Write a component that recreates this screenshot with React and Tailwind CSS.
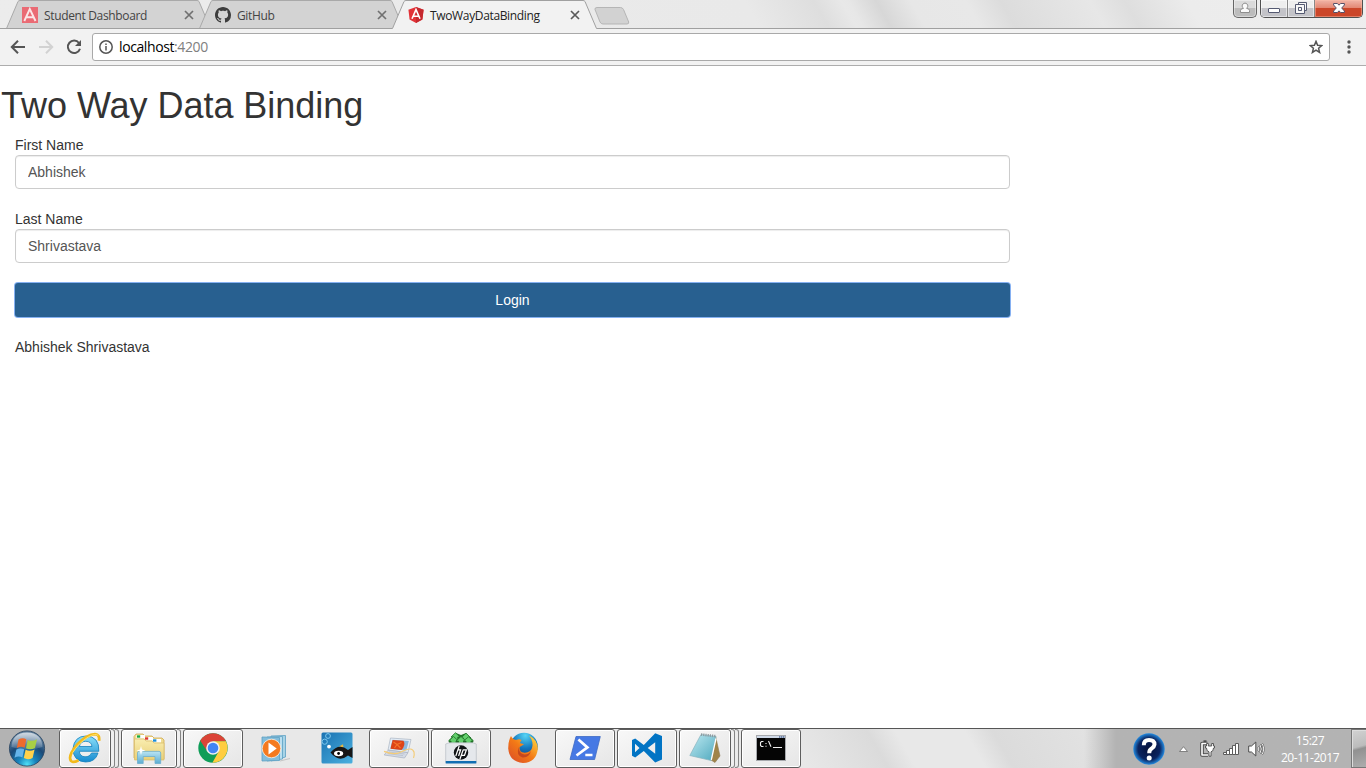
import React from "react";

const ICON = "block h-8 w-8 shrink-0 overflow-visible";

function AngularFlat() {
  return (
    <svg viewBox="0 0 16 16" className="h-4 w-4">
      <rect width="16" height="16" fill="#ea6b74" />
      <path d="M2.3 14 L7.8 2 L13.5 14 M4.3 10.3 H11.6" fill="none" stroke="#fbe6e7" strokeWidth="1.9" />
    </svg>
  );
}
function GitHubMark() {
  return (
    <svg viewBox="0 0 16 16" className="h-4 w-4" fill="#3c3c3c">
      <path d="M8 0C3.58 0 0 3.58 0 8c0 3.54 2.29 6.53 5.47 7.59.4.07.55-.17.55-.38 0-.19-.01-.82-.01-1.49-2.01.37-2.53-.49-2.69-.94-.09-.23-.48-.94-.82-1.13-.28-.15-.68-.52-.01-.53.63-.01 1.08.58 1.23.82.72 1.21 1.87.87 2.33.66.07-.52.28-.87.51-1.07-1.78-.2-3.64-.89-3.64-3.95 0-.87.31-1.59.82-2.15-.08-.2-.36-1.02.08-2.12 0 0 .67-.21 2.2.82.64-.18 1.32-.27 2-.27s1.36.09 2 .27c1.53-1.04 2.2-.82 2.2-.82.44 1.1.16 1.92.08 2.12.51.56.82 1.27.82 2.15 0 3.07-1.87 3.75-3.65 3.95.29.25.54.73.54 1.48 0 1.07-.01 1.93-.01 2.2 0 .21.15.46.55.38A8.01 8.01 0 0 0 16 8c0-4.42-3.58-8-8-8z" />
    </svg>
  );
}
function AngularShield() {
  return (
    <svg viewBox="0 0 16 16" className="h-4 w-4">
      <path d="M8 0 L15.6 2.7 L14.4 12.5 L8 16 L1.6 12.5 L.4 2.7 Z" fill="#e23237" />
      <path d="M8 0 L15.6 2.7 L14.4 12.5 L8 16 Z" fill="#c5282e" />
      <path d="M4 11.7 L8 2.6 L12 11.7 M5.4 9.2 H10.6" fill="none" stroke="#fff" strokeWidth="1.6" />
    </svg>
  );
}

function Tab({ icon, title, active, first }) {
  return (
    <div className={`relative h-[29px] w-[205px] shrink-0 ${first ? "" : "-ml-3"} ${active ? "z-10" : ""}`}>
      <svg viewBox="0 0 205 29" className="absolute inset-0 h-[29px] w-[205px]">
        <path
          d="M0.5 29 V28.5 L12 1.5 Q12.6 .5 14 .5 H191 Q192.4 .5 193 1.5 L204.5 28.5 V29 Z"
          fill={active ? "#f2f2f2" : "#d3d3d3"}
        />
        <path
          d="M0.5 28.5 L12 1.5 Q12.6 .5 14 .5 H191 Q192.4 .5 193 1.5 L204.5 28.5"
          fill="none"
          stroke={active ? "#a0a0a0" : "#a9a9a9"}
        />
        {!active && <path d="M0 28.5 H205" stroke="#a0a0a0" />}
      </svg>
      <div className="relative flex h-[29px] items-center pt-px pr-[17px] pl-4">
        {icon}
        <span className={`ml-1.5 flex-1 pt-px text-[12px] leading-4 tracking-[-0.35px] whitespace-nowrap ${active ? "text-[#222]" : "text-[#444]"}`}>{title}</span>
        <svg viewBox="0 0 10 10" className="h-[10px] w-[10px]" stroke={active ? "#5a5a5a" : "#707070"} strokeWidth="1.7">
          <path d="M1 1 L9 9 M9 1 L1 9" />
        </svg>
      </div>
    </div>
  );
}

function WindowButtons() {
  return (
    <div className="ml-auto flex items-start pr-[3px]">
      <div className="mr-[3px] flex h-[18px] w-6 items-center justify-center rounded-b-[5px] border border-t-0 border-[#666] bg-linear-to-b from-[#dadada] from-50% to-[#bcbcbc] to-50% shadow-[inset_0_0_0_1px_rgba(255,255,255,0.4)]">
        <svg viewBox="0 0 12 12" className="mb-px h-3 w-3" fill="#fafafa" stroke="#8e8e8e">
          <path d="M1.5 10.5 V8.5 Q1.5 6.8 4.5 6.3 A2.8 2.8 0 1 1 7.5 6.3 Q10.5 6.8 10.5 8.5 V10.5 Z" />
        </svg>
      </div>
      <div className="flex h-[18px] overflow-hidden rounded-b-[5px] border border-t-0 border-[#505050]">
        <div className="flex w-[27px] items-end justify-center border-r border-[#888] bg-linear-to-b from-[#eeeeee] from-50% to-[#c3c3c8] to-50% pb-1 shadow-[inset_0_0_0_1px_rgba(255,255,255,0.5)]">
          <div className="h-[5px] w-3 rounded-[1px] border border-[#555a72] bg-white" />
        </div>
        <div className="flex w-[27px] items-center justify-center border-r border-[#888] bg-linear-to-b from-[#eeeeee] from-50% to-[#c3c3c8] to-50% shadow-[inset_0_0_0_1px_rgba(255,255,255,0.5)]">
          <svg viewBox="0 0 12 12" className="mb-px h-3 w-3" fill="#f7f7f7" stroke="#555a72">
            <path d="M3.5 .5 H11.5 V8.5 H3.5 Z" />
            <path d="M.5 2.5 H9.5 V11.5 H.5 Z M3.5 5.5 H6.5 V8.5 H3.5 Z" fillRule="evenodd" />
          </svg>
        </div>
        <div className="flex w-[47px] items-center justify-center bg-linear-to-b from-[#f0b5a8] via-[#e28470] via-49% to-[#cb4629] to-50% shadow-[inset_0_0_0_1px_rgba(255,190,170,0.45)]">
          <svg viewBox="0 0 12 10" className="mb-px h-[10px] w-3">
            <path d="M.6 .5 H4.4 L6 2.2 L7.6 .5 H11.4 V2 L8.7 5 L11.4 8 V9.5 H7.6 L6 7.8 L4.4 9.5 H.6 V8 L3.3 5 L.6 2 Z" fill="#fff" stroke="#565068" />
          </svg>
        </div>
      </div>
    </div>
  );
}

function Toolbar() {
  return (
    <div className="flex h-[37px] items-center border-b border-[#adadad] bg-[#f2f2f2]">
      <svg viewBox="0 0 16 16" className="ml-[10px] h-4 w-4" fill="none" stroke="#555" strokeWidth="2">
        <path d="M15 8 H2.5 M8 1.8 L1.8 8 L8 14.2" />
      </svg>
      <svg viewBox="0 0 16 16" className="ml-3 h-4 w-4" fill="none" stroke="#d2d2d2" strokeWidth="2">
        <path d="M1 8 H13.5 M8 1.8 L14.2 8 L8 14.2" />
      </svg>
      <svg viewBox="0 0 16 16" className="ml-3 h-4 w-4" fill="none" stroke="#555" strokeWidth="2">
        <path d="M13 4 A6.2 6.2 0 1 0 14 9.7" />
        <path d="M15 1 V7 H9 Z" fill="#555" stroke="none" />
      </svg>
      <div className="ml-[10px] flex h-7 w-[1238px] items-center rounded-[3px] border border-[#a9a9a9] bg-white px-1.5">
        <svg viewBox="0 0 14 14" className="h-[14px] w-[14px]" fill="none" stroke="#555" strokeWidth="1.5">
          <circle cx="7" cy="7" r="6.2" />
          <path d="M7 6 V10.5 M7 3.4 V5" />
        </svg>
        <span className="mb-px ml-1.5 text-[14px] tracking-[-0.4px] text-black">localhost<span className="text-[#808080]">:4200</span></span>
        <svg viewBox="0 0 14 14" className="ml-auto h-[14px] w-[14px]" fill="none" stroke="#555" strokeWidth="1.5">
          <path d="M7 1.4 L8.6 5.3 L12.8 5.6 L9.6 8.3 L10.6 12.5 L7 10.2 L3.4 12.5 L4.4 8.3 L1.2 5.6 L5.4 5.3 Z" />
        </svg>
      </div>
      <svg viewBox="0 0 4 14" className="ml-[17px] h-[14px] w-1" fill="#555">
        <circle cx="2" cy="2" r="1.7" /><circle cx="2" cy="7" r="1.7" /><circle cx="2" cy="12" r="1.7" />
      </svg>
    </div>
  );
}

function Field({ label, value }) {
  return (
    <div className="mb-5">
      <label className="block h-5 leading-5">{label}</label>
      <input
        readOnly
        value={value}
        className="block h-[34px] w-full rounded-[4px] border border-[#ccc] bg-white px-3 py-1.5 text-[14px] leading-5 text-[#555] shadow-[inset_0_1px_1px_rgba(0,0,0,0.075)] outline-none"
      />
    </div>
  );
}

function StartOrb() {
  return (
    <svg viewBox="0 0 38 38" className="ml-2 h-[38px] w-[38px]">
      <defs>
        <radialGradient id="orb" cx=".5" cy=".95" r=".85">
          <stop offset="0" stopColor="#4fe0f6" />
          <stop offset=".3" stopColor="#1784bd" />
          <stop offset=".65" stopColor="#1b4a78" />
          <stop offset="1" stopColor="#5f7f9d" />
        </radialGradient>
        <linearGradient id="orbShine" x1="0" y1="0" x2="0" y2="1">
          <stop offset="0" stopColor="#fff" stopOpacity=".7" />
          <stop offset="1" stopColor="#fff" stopOpacity=".12" />
        </linearGradient>
      </defs>
      <circle cx="19" cy="18.5" r="17.6" fill="url(#orb)" stroke="#28435e" strokeWidth=".8" />
      <path d="M3.5 17 Q4 3 19 2.5 Q34 3 34.5 17 Q19 22 3.5 17Z" fill="url(#orbShine)" />
      <path d="M10.5 9.5 Q14.5 7 18.3 9.2 L16.6 17.8 Q13 15.8 8.8 18 Z" fill="#ee6b2d" />
      <path d="M19.7 9.9 Q24 12 29 9.3 L27 18 Q22.3 20.3 18 18.3 Z" fill="#a8cf45" />
      <path d="M8.4 19.5 Q12.5 17.4 16.2 19.3 L14.4 27.5 Q10.6 25.5 6.5 27.8 Z" fill="#65b4ea" />
      <path d="M17.6 19.8 Q22 21.8 26.6 19.5 L24.6 28 Q20 30.3 15.8 28.1 Z" fill="#ffd14b" />
    </svg>
  );
}

function InternetExplorer() {
  return (
    <svg viewBox="0 0 32 32" className={ICON}>
      <defs>
        <linearGradient id="ie" x1="0" y1="0" x2="0" y2="1">
          <stop offset="0" stopColor="#8be0fa" /><stop offset="1" stopColor="#168bd0" />
        </linearGradient>
      </defs>
      <path d="M29 21 H22.5 Q20.5 25 16 24.8 Q10.8 24.5 10.3 19.3 H29.8 Q30.6 4.5 17 4 Q5.3 4.2 4 16.5 Q4 29.4 16.6 30 Q26.5 30 29 21 Z M10.4 14.5 Q11.3 9.4 16.8 9.3 Q22.4 9.4 23 14.5 Z" fill="url(#ie)" stroke="#1681bd" strokeWidth=".8" fillRule="evenodd" />
      <path d="M30 8.8 Q31 2.5 26 2.2 Q18 2.5 8 12.8 Q-1.5 24 2 28.9 Q4 31.2 9.5 28.2" fill="none" stroke="#f2ba1c" strokeWidth="2.8" />
      <path d="M29.2 3.6 Q27 .8 19.5 4.8 Q9 11.5 3.5 21" fill="none" stroke="#ffe36a" strokeWidth="1" />
    </svg>
  );
}
function Explorer() {
  return (
    <svg viewBox="0 0 32 32" className={ICON}>
      <defs>
        <linearGradient id="folder" x1="0" y1="0" x2="0" y2="1">
          <stop offset="0" stopColor="#f9edb0" /><stop offset="1" stopColor="#e9d077" />
        </linearGradient>
        <linearGradient id="stand" x1="0" y1="0" x2="0" y2="1">
          <stop offset="0" stopColor="#b9e4f3" /><stop offset="1" stopColor="#5cacd1" />
        </linearGradient>
      </defs>
      <path d="M1 26 V4.5 L3 2 H10 L12 4 H19 L21 6 H29 L31 8 V27 Z" fill="#f0dc92" stroke="#cfa951" strokeWidth=".8" />
      <path d="M3.5 3 H12 V6.5 H3.5Z M11.5 5 H20 V8.5 H11.5Z M19.5 7 H28 V10.5 H19.5Z" fill="#fff" />
      <path d="M4 3.3 h3.2 v2.4 h-3.2z" fill="#1aaa3c" /><path d="M12 5.3 h3.2 v2.4 h-3.2z" fill="#dc372c" /><path d="M20 7.3 h3.4 v2.4 h-3.4z" fill="#1a8ed8" />
      <path d="M1.5 7 H11 L13 9 H19 L21 11 H31 V28 H1.5 Z" fill="url(#folder)" stroke="#d9ba68" strokeWidth=".7" />
      <path d="M4.5 31.5 V21 Q4.5 19.4 6 19.4 H26 Q27.7 19.4 27.7 21 V31.5 H22 V24.5 H10.2 V31.5 Z" fill="url(#stand)" stroke="#6dafcf" strokeWidth=".8" />
      <path d="M8 14 L9 17.5 L12.5 18.5 L9 19.5 L8 23 L7 19.5 L3.5 18.5 L7 17.5Z" fill="#fff" />
    </svg>
  );
}
function Chrome() {
  return (
    <svg viewBox="0 0 32 32" className={ICON}>
      <circle cx="16" cy="16" r="14.7" fill="#0f9d58" />
      <path d="M3.27 8.65 A14.7 14.7 0 0 1 28.73 8.65 L29 9.3 H16 L10.2 19.35 Z" fill="#db4437" />
      <path d="M28.95 9.3 A14.7 14.7 0 0 1 15.4 30.7 L21.8 19.35 L16 9.3 Z" fill="#ffcd40" />
      <circle cx="16" cy="16" r="6.8" fill="#f1f1f1" />
      <circle cx="16" cy="16" r="5.3" fill="#4285f4" />
    </svg>
  );
}
function MediaPlayer() {
  return (
    <svg viewBox="0 0 32 32" className={ICON}>
      <g stroke="#5c9fc3" strokeWidth=".8">
        <path d="M12 4 L26.5 3.5 V25 L12 29Z" fill="#a8d4e7" />
        <path d="M8 5 L23.5 4.5 V27 L8 29Z" fill="#bbdff0" />
        <path d="M3 5 L20.5 5.5 V28.5 L3 29Z" fill="#83bddb" />
      </g>
      <path d="M21 29 L31 26.5" stroke="#c4c4c4" />
      <circle cx="12.5" cy="16.5" r="9.3" fill="#f47a1f" stroke="#fff3e5" strokeWidth=".8" />
      <path d="M9.5 10.5 L17.7 16.5 L9.5 22.5 Z" fill="#fff" />
    </svg>
  );
}
function Fish() {
  return (
    <svg viewBox="0 0 32 32" className={ICON}>
      <defs><linearGradient id="sea" x1="0" y1="0" x2="1" y2="1"><stop offset="0" stopColor="#1a72b2" /><stop offset="1" stopColor="#4bb0df" /></linearGradient></defs>
      <rect x=".5" y=".5" width="31" height="31" rx="1.5" fill="url(#sea)" />
      <g fill="none" stroke="#7cc7ed"><circle cx="7" cy="4" r="2.4" /><circle cx="3.7" cy="9.7" r="2.6" /></g>
      <circle cx="8" cy="14.6" r="1.9" fill="#fff" />
      <path d="M18 14.5 L22 12.3 L22.5 15.5Z" fill="#e8b83d" />
      <path d="M9.5 20.5 Q18 10.5 27 18 L31.5 15 V26 L27 23.5 Q18 31 9.5 20.5Z" fill="#161616" />
      <ellipse cx="17.6" cy="21.5" rx="4.6" ry="2.8" fill="#fff" /><circle cx="17.6" cy="21.5" r="1.4" />
    </svg>
  );
}
function Laptop() {
  return (
    <svg viewBox="0 0 32 32" className={ICON}>
      <path d="M7.5 6 L28 7.5 L25 20.5 L5 18 Z" fill="#e4ecf5" stroke="#a9b4c3" strokeWidth=".7" />
      <path d="M9.5 7.7 L25.8 9 L23.3 18.6 L7.2 16.7 Z" fill="#8fb9dc" />
      <path d="M9.6 8 L20.5 8.8 Q23 13 18.5 18 L7.5 16.7 Z" fill="#dd4417" />
      <path d="M14 12.5 L10.5 10 M14 12.5 L18.5 10.5 M14 12.5 L11.5 16 M14 12.5 L17.5 16" stroke="#f5742b" strokeWidth="1.2" />
      <path d="M5 18.2 L25 20.7 L21.5 26 L1.2 23 Z" fill="#d5dbe5" stroke="#a9b1c2" strokeWidth=".7" />
      <path d="M6 20 L21.5 22 M4.8 21.6 L20 23.6" stroke="#b2bac8" strokeWidth=".7" />
      <path d="M1 19.4 Q12 24 20 19 Q29 14.5 31 20 Q31.7 23.5 30.5 26" fill="none" stroke="#f4cc78" strokeWidth="1.2" />
    </svg>
  );
}
function HpBag() {
  return (
    <svg viewBox="0 0 32 32" className={ICON}>
      <path d="M4 12 V8 L11 1 L16 3 L21 1 L28 8 V12 Z" fill="#23762a" />
      <g fill="#62cf6c" stroke="#1f7027" strokeWidth=".8">
        <path d="M10.5 .7 L15 5 H12.8 V8 H8.2 V5 H6Z" />
        <path d="M21 1.2 L26 6 H23.5 V9 H18.5 V6 H16Z" />
        <path d="M8.5 4.5 L13.5 9 H11 V12 H6 V9 H3.5Z" />
        <path d="M16 4.5 L21 9 H18.5 V12 H13.5 V9 H11Z" />
        <path d="M23.5 4.8 L28.5 9 H26 V12 H21 V9 H18.5Z" />
      </g>
      <path d="M.7 12 L4 10.8 H28 L31.3 12 V30.5 H.7 Z" fill="#e5e8ec" stroke="#b8bdc4" strokeWidth=".7" />
      <path d="M.7 29 H31.3 V31.5 H.7Z" fill="#116eb2" />
      <circle cx="16" cy="20.5" r="7.2" fill="#101316" />
      <path d="M14.2 14 L10.8 24 M13 17.8 H15.6 L13.6 24 M18.2 17.8 L14.8 27.5 M18.2 17.8 H21.4 L19.5 23.3 H16.5" fill="none" stroke="#fff" strokeWidth="1.2" />
    </svg>
  );
}
function Firefox() {
  return (
    <svg viewBox="0 0 32 32" className={ICON}>
      <defs>
        <radialGradient id="globe" cx=".55" cy=".1" r=".85"><stop offset="0" stopColor="#55d4f5" /><stop offset=".55" stopColor="#1476bd" /><stop offset="1" stopColor="#173a79" /></radialGradient>
        <linearGradient id="fox" x1="1" y1="0" x2="0" y2="1"><stop offset="0" stopColor="#ffe045" /><stop offset=".5" stopColor="#f37a16" /><stop offset="1" stopColor="#d9482a" /></linearGradient>
      </defs>
      <circle cx="17" cy="14.5" r="13.7" fill="url(#globe)" />
      <path d="M4 4 Q5.5 7.5 9 8 Q12.5 6.6 14.5 8 L12.8 11 L17 12.3 L12.7 15 Q11.8 20.5 17.8 20.7 Q24 20 25 16 Q27 10 22 3.5 Q30.8 7.5 30.8 17 Q29.3 30.6 16 31 Q2.2 29.5 1.2 16.5 Q1.2 8.5 4 4 Z" fill="url(#fox)" />
      <path d="M12 15 Q11.5 22 17.5 22.5 Q21.5 22.5 24 19 Q22 26 15.5 25.4 Q8.5 23.5 12 15Z" fill="#b83b20" opacity=".75" />
    </svg>
  );
}
function PowerShell() {
  return (
    <svg viewBox="0 0 32 32" className={ICON}>
      <path d="M7 4.5 H31.3 L25.6 27.5 H1 Z" fill="#4679e4" stroke="#3c69c4" strokeWidth=".8" />
      <path d="M9.4 7.5 L18.4 15.4 L7.5 23.5 M16.3 23 H23.5" fill="none" stroke="#fff" strokeWidth="2.7" />
    </svg>
  );
}
function VsCode() {
  return (
    <svg viewBox="0 0 32 32" className={ICON}>
      <path fillRule="evenodd" d="M24.2 1.2 L31 4 V27.5 L24.2 30.5 L12.8 18.9 L4.2 25.5 L1 23.8 V8 L4.2 6.5 L12.8 13 Z M4 11.8 V20.2 L8.5 16 Z M16.7 16 L24.2 21.8 V10.2 Z" fill="#0174c4" />
    </svg>
  );
}
function Notepad() {
  return (
    <svg viewBox="0 0 32 32" className={ICON}>
      <defs><linearGradient id="note" x1="0" y1="0" x2="1" y2="1"><stop offset="0" stopColor="#bfeaf2" /><stop offset="1" stopColor="#4fa9be" /></linearGradient></defs>
      <path d="M26.5 4 L31 24 L26 30.5 L22 28Z" fill="#a08449" stroke="#8b7850" strokeWidth=".6" />
      <path d="M12 2.5 L27 4.5 L22 28.5 L.8 23.5 Z" fill="url(#note)" stroke="#86b3bf" strokeWidth=".7" />
      <path d="M12 2.5 L27 4.2" stroke="#8d9a9f" strokeWidth="2.6" strokeDasharray="1.2 1" />
      <path d="M22.3 27.8 L27 6.5" stroke="#fff" strokeWidth="1.3" />
    </svg>
  );
}
function CommandPrompt() {
  return (
    <svg viewBox="0 0 32 32" className={ICON}>
      <rect x="1.5" y="3.5" width="29" height="25" fill="#050505" stroke="#a7a9ad" />
      <path d="M2 4 H30 V6 H2Z" fill="#d0dae8" />
      <path d="M24 5 h1.4 M26 5 h1.4 M28 5 h1.4" stroke="#506995" strokeWidth="1.3" />
      <g fill="none" stroke="#eee" strokeWidth="1.1"><path d="M8.5 9.5 H6.5 L5.5 10.5 V13.5 L6.5 14.5 H8.5 M11 11 V12 M11 13.8 V14.8 M13.5 9 L16 14.8 M18 15.5 H27" /></g>
    </svg>
  );
}

const TASKS = [
  { Icon: InternetExplorer, open: true, stacks: 2 },
  { Icon: Explorer, open: true, stacks: 1 },
  { Icon: Chrome, open: true },
  { Icon: MediaPlayer },
  { Icon: Fish },
  { Icon: Laptop, open: true },
  { Icon: HpBag, open: true },
  { Icon: Firefox },
  { Icon: PowerShell, open: true },
  { Icon: VsCode, open: true },
  { Icon: Notepad, open: true, stacks: 2 },
  { Icon: CommandPrompt, open: true },
];

function Task({ Icon, open, stacks = 0 }) {
  return (
    <div className="flex h-[39px] w-[60px] shrink-0">
      <div
        className={`flex min-w-0 flex-1 items-center justify-center pb-px ${
          open ? "rounded-[3px] border border-[#5e5e5e] bg-linear-to-br from-[#f8f8f8] to-[#e6e6e6] shadow-[inset_0_0_0_1px_#fff]" : ""
        }`}
      >
        <Icon />
      </div>
      {stacks > 0 && <div className="w-1 rounded-r-[3px] border-y border-r border-[#858585] bg-[#f0f0f0]" />}
      {stacks > 1 && <div className="w-1 rounded-r-[3px] border-y border-r border-[#858585] bg-[#ebebeb]" />}
    </div>
  );
}

function Tray() {
  return (
    <div className="ml-auto flex h-[39px] w-[282px] items-center bg-linear-to-r from-transparent to-[#b3b3b3] to-[32px]">
      <svg viewBox="0 0 32 32" className="ml-[49px] h-8 w-8">
        <defs><radialGradient id="help"><stop offset="0" stopColor="#06113a" /><stop offset=".7" stopColor="#0a2460" /><stop offset="1" stopColor="#248be0" /></radialGradient></defs>
        <circle cx="16" cy="16" r="15.7" fill="url(#help)" />
        <path d="M10.8 12.2 Q10.8 7 16 7 Q21.6 7 21.5 11.6 Q21.2 14 18.6 15.6 Q16.2 17 16.2 20.3" fill="none" stroke="#fff" strokeWidth="4" />
        <circle cx="16.2" cy="25" r="2.5" fill="#fff" />
      </svg>
      <svg viewBox="0 0 9 6" className="ml-3.5 h-1.5 w-[9px]"><path d="M.5 5.5 H8.5 L4.5 .7Z" fill="#fff" stroke="#6b6b6b" strokeWidth=".8" /></svg>
      <svg viewBox="0 0 16 16" className="ml-[11px] h-4 w-4 overflow-visible" strokeLinejoin="round">
        <path d="M8.5 2.5 H3 V14 H9" fill="none" stroke="#4c4c4c" strokeWidth="3.6" />
        <path d="M4.5 .3 H7.5" stroke="#4c4c4c" strokeWidth="2" />
        <path d="M8.5 2.5 H3 V14 H9" fill="none" stroke="#fff" strokeWidth="1.6" />
        <path d="M7.5 2.5 V5 H6.5 V7 H7.5 Q7.5 10.3 10 10.8 V15.2 H12 V10.8 Q14.5 10.3 14.5 7 H15.5 V5 H14.5 V2.5 H12.7 V5 H9.3 V2.5Z" fill="#fff" stroke="#4c4c4c" strokeWidth=".9" />
      </svg>
      <svg viewBox="0 0 17 14" className="ml-2 h-[14px] w-[17px]" fill="#fff" stroke="#5c5c5c" strokeWidth="1">
        <path d="M.5 10.5h3v2h-3z M3.5 8.5h3v4h-3z M6.5 6.5h3v6h-3z M9.5 3.5h3v9h-3z M12.5 1.5h3v11h-3z" />
      </svg>
      <svg viewBox="0 0 17 16" className="ml-2 h-4 w-[17px]">
        <path d="M.7 5 H3.5 L7.8 1 V15 L3.5 11 H.7Z" fill="#fff" stroke="#4c4c4c" />
        <path d="M10 5.5 Q11.6 8 10 10.5 M12 3.8 Q14.6 8 12 12.2 M14 2.5 Q17.4 8 14 13.5" fill="none" stroke="#555" strokeWidth="1.9" />
        <path d="M10 5.5 Q11.6 8 10 10.5 M12 3.8 Q14.6 8 12 12.2 M14 2.5 Q17.4 8 14 13.5" fill="none" stroke="#fff" strokeWidth=".9" />
      </svg>
      <div className="ml-[5px] flex w-[80px] flex-col items-center text-[12px] leading-[17px] tracking-[-0.45px] text-white">
        <span>15:27</span>
        <span className="whitespace-nowrap">20-11-2017</span>
      </div>
      <div className="ml-auto h-full w-[15px] border border-r-0 border-[#777] bg-[linear-gradient(165deg,#d2d2d2_0%,#bcbcbc_45%,#919191_52%,#adadad_100%)] shadow-[inset_1px_1px_0_#ddd]" />
    </div>
  );
}

export default function App() {
  return (
    <div className="flex h-[768px] w-[1366px] flex-col overflow-hidden bg-white font-['Open_Sans','Noto_Sans',sans-serif]">
      <header>
        <div className="flex h-[29px] border-b border-[#a0a0a0] bg-[linear-gradient(60deg,#ececec_0%,#e9e9e9_55%,#dedede_60%,#e8e8e8_62%,#e7e7e7_62.5%,#d7d7d7_64.5%,#e7e7e7_67%,#e8e8e8_71%,#dcdcdc_73.5%,#e7e7e7_80%,#dedede_82.5%,#ececec_87%,#eeeeee_100%)] pl-1.5">
          <Tab first icon={<AngularFlat />} title="Student Dashboard" />
          <Tab icon={<GitHubMark />} title="GitHub" />
          <Tab active icon={<AngularShield />} title="TwoWayDataBinding" />
          <svg viewBox="0 0 36 18" className="mt-[7px] -ml-[3px] h-[18px] w-9">
            <path d="M3 .5 H26.5 Q28.5 .5 29.5 2.5 L34.7 15 Q35 17 33 17 H9 Q7 17 6 15 L1 2.5 Q.6 .5 3 .5Z" fill="#d2d2d2" stroke="#b5b5b5" />
          </svg>
          <WindowButtons />
        </div>
        <Toolbar />
      </header>

      <main className="flex-1 font-['Liberation_Sans',Arial,sans-serif] text-[14px] leading-5 text-[#333]">
        <h1 className="mt-5 mb-[9px] pl-px text-[36px] leading-10 font-normal tracking-[-0.03px]">Two Way Data Binding</h1>
        <div className="ml-[15px] w-[995px]">
          <Field label="First Name" value="Abhishek" />
          <Field label="Last Name" value="Shrivastava" />
          <button className="mb-5 block h-[34px] w-full rounded-[3px] bg-[#286090] text-center leading-5 text-white shadow-[0_0_0_1px_#86b1f2]">
            Login
          </button>
          <p>Abhishek Shrivastava</p>
        </div>
      </main>

      <footer className="flex h-10 border-t border-[#555] bg-[linear-gradient(60deg,#e8e8e8_0%,#e8e8e8_58%,#dbdbdb_64%,#e8e8e8_66%,#e8e8e8_71%,#dbdbdb_73%,#e2e2e2_80%,#e2e2e2_100%)]">
        <div className="flex w-[59px] items-center bg-[#b3b3b3]"><StartOrb /></div>
        <div className="flex gap-0.5">
          {TASKS.map((t, i) => <Task key={i} {...t} />)}
        </div>
        <Tray />
      </footer>
    </div>
  );
}
